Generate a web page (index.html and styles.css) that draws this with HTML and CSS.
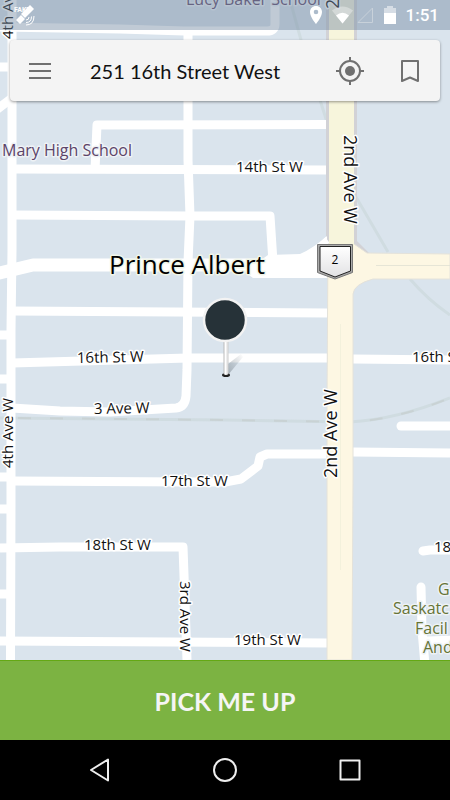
FILE: index.html
```
<!DOCTYPE html>
<html lang="en">
<head>
  <meta charset="UTF-8">
  <meta name="viewport" content="width=device-width, initial-scale=1">
  <title>Pick me up</title>
  <link rel="stylesheet" href="styles.css">
</head>
<body>

  <main class="map">
    <svg class="map-canvas" viewBox="0 0 450 660" preserveAspectRatio="xMidYMin slice" role="img" aria-label="Map of Prince Albert">
      <defs>
        <linearGradient id="shield-fill" x1="0" y1="0" x2="0" y2="1">
          <stop offset="0" stop-color="#fff"/>
          <stop offset="1" stop-color="#e2e2e4"/>
        </linearGradient>
        <linearGradient id="pin-pole" x1="0" y1="0" x2="1" y2="0">
          <stop offset="0" stop-color="#bbb"/>
          <stop offset="0.4" stop-color="#fff"/>
          <stop offset="1" stop-color="#ccc"/>
        </linearGradient>
        <linearGradient id="pin-shade" x1="0" y1="1" x2="1" y2="0">
          <stop offset="0" stop-color="#7d8890" stop-opacity="0.6"/>
          <stop offset="1" stop-color="#7d8890" stop-opacity="0"/>
        </linearGradient>
      </defs>

      <!-- railway -->
      <g class="rail">
        <path d="M290 0L301 40L327 122M356 197L388 252M410 279Q428 300 450 315"/>
        <path d="M0 418L225 420L350 422Q395 420 450 398"/>
        <path class="rail-dash" d="M18 418L225 420L350 422Q395 420 450 398"/>
      </g>

      <!-- streets -->
      <g class="streets">
        <path d="M12 0V170L12 250L11 330V500L10.500 660"/>
        <path d="M0 27L120 29L184 31H267Q275 31 275 24V0"/>
        <path d="M188 30V160L190 216L188 262L187 370L186 396Q185 407 176 408L110 412L60 411L12 408"/>
        <path d="M0 67H8M-4 110L12 98M0 335H8M0 379H8M0 477H8M0 509H8M0 594H8"/>
        <path d="M95 170L97 125L327 124.500"/>
        <path d="M12 169L327 170"/>
        <path d="M12 215L190 216H270L273 262"/>
        <path d="M12 311L327 313"/>
        <path d="M12 363L188 358H327M353 359L450 360"/>
        <path d="M12 481L190 482L225 482L241 479L258 466L260 457L267 454H327M353 452L450 453"/>
        <path class="round" d="M401 426H455"/>
        <path d="M0 548L60 547H183L187 660"/>
        <path d="M0 641L327 643"/>
        <path class="round" d="M423 551L430 550H455M421 587L422 630L425 665M426 641L455 640"/>
        <path class="wide" d="M-5 274L33 265H300"/>
      </g>
      <path fill="#fff" d="M268 255L300 254Q314 248 329 234V278H253L245 272Z"/>

      <!-- highway -->
      <path fill="#d2d2d6" d="M326 0H357V241L369 253V257H340L326 238Z"/>
      <path fill="#fff" d="M316 246L327 236V258H316Z"/>
      <path class="highway" d="M328 244H354L367 253L450 254V279H373Q354 284 353 294V480L352 660H327V400Z"/>
      <path fill="#f7f5dc" d="M329 0H354V250H329Z"/>
      <path stroke="#e0e0d2" stroke-opacity="0.800" d="M376 265.500H450"/>
      <path stroke="#f3f1dc" d="M340.500 324V570"/>

      <!-- street names -->
      <g class="label">
        <text x="236" y="172">14th St W</text>
        <text transform="translate(77 363) rotate(-1)">16th St W</text>
        <text transform="translate(94 414) rotate(-1)">3 Ave W</text>
        <text x="161" y="486">17th St W</text>
        <text x="84" y="550">18th St W</text>
        <text x="234" y="645">19th St W</text>
        <text x="412" y="362">16th St W</text>
        <text x="434" y="552">18th St W</text>
        <text transform="translate(13 468) rotate(-90)">4th Ave W</text>
        <text transform="translate(13 39) rotate(-90)">4th Ave W</text>
        <text transform="translate(180 581) rotate(90)">3rd Ave W</text>
      </g>
      <g class="label label-highway">
        <text transform="translate(344 135) rotate(90)">2nd Ave W</text>
        <text transform="translate(337 478) rotate(-90)">2nd Ave W</text>
        <text transform="translate(339 9) rotate(-90)">2nd Ave W</text>
      </g>
      <g class="label label-school">
        <text x="186" y="5">Lucy Baker School</text>
        <text x="2" y="156">Mary High School</text>
      </g>
      <g class="label label-facility">
        <text x="438" y="595">Go</text>
        <text x="393" y="614">Saskatc</text>
        <text x="415" y="634">Facil</text>
        <text x="423" y="653">And</text>
      </g>
      <text class="label label-city" x="109" y="274">Prince Albert</text>

      <!-- highway 2 shield -->
      <path d="M317.500 244.500H352.500V272.500L335 279L317.500 272.500Z" fill="#aaa" stroke="#777"/>
      <path d="M320 246.500H350.500V271L335 277L320 271Z" fill="url(#shield-fill)" stroke="#222"/>
      <text class="label-shield" x="335" y="264">2</text>

      <!-- pickup pin -->
      <path d="M228 375V364L241 354L243 357Z" fill="url(#pin-shade)"/>
      <ellipse cx="226" cy="375" rx="4" ry="2" fill="#222"/>
      <path d="M223.500 340H228.500V374Q226 376 223.500 374Z" fill="url(#pin-pole)"/>
      <circle cx="225" cy="320" r="21" fill="#263238" stroke="#f3f3f3" stroke-width="2.500"/>
    </svg>

    <header class="status-bar">
      <svg class="status-fake" viewBox="0 0 24 24" width="24" height="24" aria-hidden="true">
        <text x="3" y="9">FAKE</text>
        <path d="M5 17L10 12L14 16L9 21ZM14 7L19 2L23 6L18 11ZM10 11L14 7L18 11L14 15Z"/>
        <path class="signal-wave" d="M15 17Q18 17 18 14M15 19.500Q20.500 19.500 20.500 13.500M15 22Q23 22 23 13"/>
      </svg>
      <svg viewBox="0 0 14 18" width="14" height="18" aria-hidden="true">
        <path d="M7 0C3.500 0 1 2.600 1 6C1 11 7 18 7 18S13 11 13 6C13 2.600 10.500 0 7 0ZM7 8.300A2.300 2.300 0 1 1 7 3.700A2.300 2.300 0 0 1 7 8.300Z"/>
      </svg>
      <svg viewBox="0 0 42 18" width="42" height="18" aria-hidden="true">
        <path opacity="0.350" d="M10.500 17.500L0 4.500Q10.500 -3.500 21 4.500Z"/>
        <path d="M10.500 17.500L4 9.500Q10.500 4 17 9.500Z"/>
        <path class="no-signal" d="M26 16.500H40.500V2Z"/>
      </svg>
      <svg viewBox="0 0 14 18" width="14" height="18" aria-hidden="true">
        <path opacity="0.500" d="M4 0H10V2H13V7H1V2H4Z"/>
        <path d="M1 7H13V18H1Z"/>
      </svg>
      <time>1:51</time>
    </header>

    <form class="search-card">
      <button class="icon-btn" type="button" aria-label="Menu">
        <svg viewBox="0 0 24 18" width="24" height="18"><path fill="#707070" d="M1 1H23V3H1ZM1 8H23V10H1ZM1 15H23V17H1Z"/></svg>
      </button>
      <input class="address" type="text" value="251 16th Street West" aria-label="Pickup address">
      <button class="icon-btn" type="button" aria-label="My location">
        <svg viewBox="0 0 28 28" width="28" height="28">
          <circle cx="14" cy="14" r="5" fill="#707070"/>
          <circle cx="14" cy="14" r="10" fill="none" stroke="#707070" stroke-width="2"/>
          <path fill="none" stroke="#707070" stroke-width="2" d="M14 0V4M14 24V28M0 14H4M24 14H28"/>
        </svg>
      </button>
      <button class="icon-btn" type="button" aria-label="Saved places">
        <svg viewBox="0 0 20 24" width="20" height="24"><path fill="none" stroke="#707070" stroke-width="2" stroke-linejoin="round" d="M2 2H18V22L10 18.500L2 22Z"/></svg>
      </button>
    </form>
  </main>

  <button class="pickup-btn" type="button">PICK ME UP</button>

  <nav class="nav-bar">
    <button type="button" aria-label="Back">
      <svg viewBox="0 0 26 26" width="26" height="26"><path d="M21 2.500V23.500L4 13Z"/></svg>
    </button>
    <button type="button" aria-label="Home">
      <svg viewBox="0 0 26 26" width="26" height="26"><circle cx="13" cy="13" r="11"/></svg>
    </button>
    <button type="button" aria-label="Recent apps">
      <svg viewBox="0 0 26 26" width="26" height="26"><rect x="3.500" y="3.500" width="19" height="19"/></svg>
    </button>
  </nav>

</body>
</html>
```

FILE: styles.css
```
* {
  box-sizing: border-box;
}

body {
  margin: 0;
  height: 100vh;
  display: flex;
  flex-direction: column;
  font-family: Lato, sans-serif;
  background: #000;
}

button {
  border: none;
  background: none;
  padding: 0;
  cursor: pointer;
}

svg {
  display: block;
}

/* map */
.map {
  position: relative;
  flex: 1;
  min-height: 0;
  overflow: hidden;
  background: #dae4ed;
}

.map-canvas {
  position: absolute;
  top: 0;
  left: 0;
  width: 100%;
  height: 100%;
}

.streets path {
  fill: none;
  stroke: #fff;
  stroke-width: 9;
  stroke-linejoin: round;
}

.streets .wide {
  stroke-width: 13;
}

.streets .round {
  stroke-linecap: round;
}

.rail path {
  fill: none;
  stroke: #d0dce1;
  stroke-width: 3;
}

.rail .rail-dash {
  stroke: #c9d2d4;
  stroke-width: 2;
  stroke-dasharray: 13 19;
}

.highway {
  fill: #fdf7e3;
  stroke: #e4e2da;
  stroke-width: 1;
}

.label {
  font-family: "Open Sans", sans-serif;
  font-size: 15px;
  fill: #111;
  stroke: #fff;
  stroke-width: 3px;
  stroke-linejoin: round;
  paint-order: stroke;
}

.label-highway {
  font-size: 18px;
}

.label-school {
  font-size: 16px;
  fill: #5c4468;
  stroke: #eef2f6;
}

.label-facility {
  font-size: 16px;
  fill: #667436;
  stroke: #eef2f6;
}

.label-city {
  font-size: 26px;
  fill: #000;
  stroke: #f0f5e8;
}

.label-shield {
  font-family: "Open Sans", sans-serif;
  font-size: 12px;
  text-anchor: middle;
  fill: #000;
}

/* status bar */
.status-bar {
  position: relative;
  display: flex;
  align-items: center;
  gap: 9px;
  height: 30px;
  padding: 0 11px;
  background: rgba(115, 138, 162, 0.45);
  color: #fff;
}

.status-bar svg {
  fill: #fff;
}

.status-bar .status-fake {
  margin-right: auto;
}

.status-fake text {
  font-family: Roboto, sans-serif;
  font-size: 7px;
  font-weight: bold;
}

.status-fake .signal-wave {
  fill: none;
  stroke: #fff;
}

.status-bar .no-signal {
  fill: none;
  stroke: #c8d1da;
  stroke-width: 1;
}

.status-bar time {
  font-family: Roboto, sans-serif;
  font-size: 17px;
  font-weight: 500;
}

/* address card */
.search-card {
  position: relative;
  display: flex;
  height: 61px;
  margin: 10px;
  background: #f4f4f4;
  border-radius: 4px;
  box-shadow: 0 1px 3px rgba(0, 0, 0, 0.4);
}

.icon-btn {
  flex: none;
  width: 60px;
  display: flex;
  align-items: center;
  justify-content: center;
}

.address {
  flex: 1;
  min-width: 0;
  padding: 0 0 0 20px;
  border: none;
  outline: none;
  background: none;
  font-family: Lato, sans-serif;
  font-size: 20px;
  color: #111;
}

/* bottom */
.pickup-btn {
  flex: none;
  height: 80px;
  background: #7cb342;
  border-top: 1px solid #64a814;
  color: #f5f5f5;
  font-family: Lato, sans-serif;
  font-size: 25px;
  font-weight: bold;
}

.nav-bar {
  flex: none;
  display: flex;
  justify-content: center;
  height: 60px;
  background: #000;
}

.nav-bar button {
  width: 125px;
  display: flex;
  align-items: center;
  justify-content: center;
}

.nav-bar svg {
  fill: none;
  stroke: #eee;
  stroke-width: 2;
  stroke-linejoin: round;
}
```
